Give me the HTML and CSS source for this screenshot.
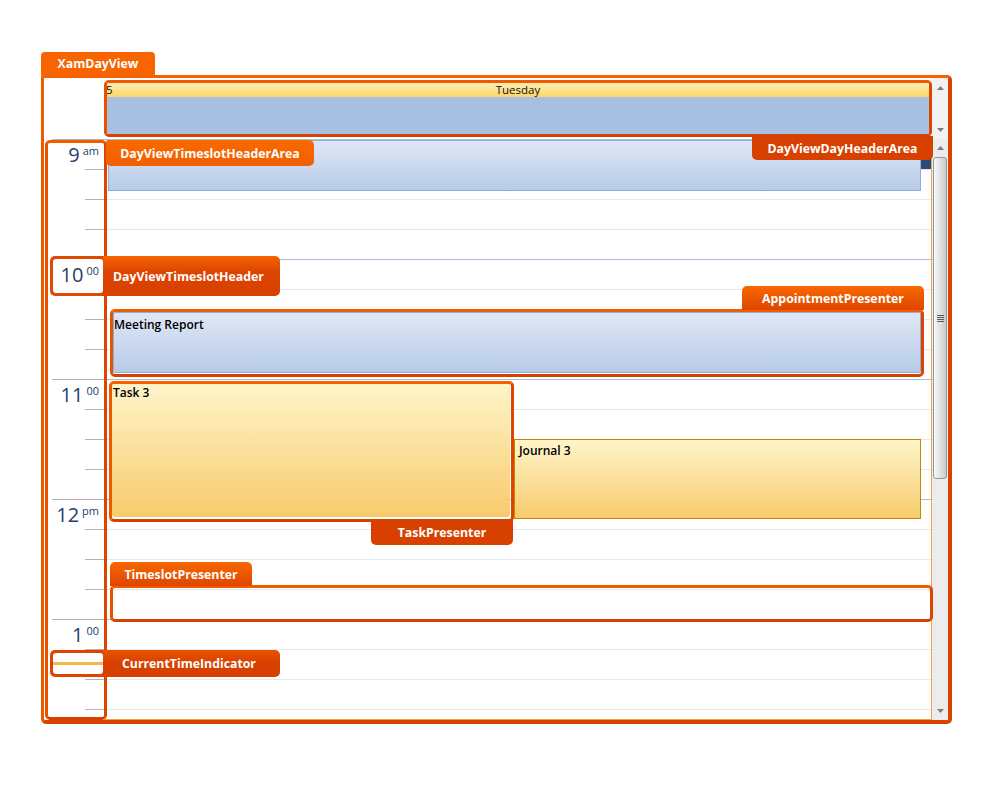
FILE: index.html
```html
<!DOCTYPE html>
<html>
<head>
<meta charset="utf-8">
<title>XamDayView</title>
<link rel="stylesheet" href="styles.css">
</head>
<body>
<div class="page">
  <div class="tab">XamDayView</div>
  <div class="frame">
    <div class="head-row">
      <div class="corner"></div>
      <div class="dayhead">
        <div class="daytitle"><span class="daynum">5</span><span class="dayname">Tuesday</span><span></span></div>
        <div class="allday"></div>
      </div>
      <div class="hscroll">
        <svg class="arrow" width="7" height="4" viewBox="0 0 7 4"><path d="M0 4L3.5 0L7 4Z"/></svg>
        <svg class="arrow" width="7" height="4" viewBox="0 0 7 4"><path d="M0 0L3.5 4L7 0Z"/></svg>
      </div>
    </div>
    <div class="body-row">
      <div class="gutter">
        <div class="hour"><div class="hlabel"><span class="hnum">9</span><span class="hsup">am</span></div><div class="mark"></div><div class="mark"></div><div class="mark"></div></div>
        <div class="hour sel"><div class="hlabel"><span class="hnum">10</span><span class="hsup">00</span></div><div class="mark"></div><div class="mark"></div><div class="mark"></div></div>
        <div class="hour"><div class="hlabel"><span class="hnum">11</span><span class="hsup">00</span></div><div class="mark"></div><div class="mark"></div><div class="mark"></div></div>
        <div class="hour"><div class="hlabel"><span class="hnum">12</span><span class="hsup">pm</span></div><div class="mark"></div><div class="mark"></div><div class="mark"></div></div>
        <div class="hour"><div class="hlabel"><span class="hnum">1</span><span class="hsup">00</span></div><div class="mark"></div><div class="mark"></div><div class="mark"></div></div>
      </div>
      <div class="grid">
        <div class="slot hr"></div><div class="slot"></div><div class="slot"></div><div class="slot"></div>
        <div class="slot hr"></div><div class="slot"></div><div class="slot"></div><div class="slot"></div>
        <div class="slot hr"></div><div class="slot"></div><div class="slot"></div><div class="slot"></div>
        <div class="slot hr"></div><div class="slot"></div><div class="slot"></div><div class="slot"></div>
        <div class="slot hr"></div><div class="slot"></div><div class="slot"></div><div class="slot"></div>
        <div class="appt blue first"></div>
        <div class="more"></div>
        <div class="appt blue meeting">Meeting Report</div>
        <div class="appt task">Task 3</div>
        <div class="appt journal">Journal 3</div>
      </div>
      <div class="vscroll">
        <div class="sbtn"><svg class="arrow" width="7" height="4" viewBox="0 0 7 4"><path d="M0 4L3.5 0L7 4Z"/></svg></div>
        <div class="thumb"><span class="grip"></span></div>
        <div class="sbtn down"><svg class="arrow" width="7" height="4" viewBox="0 0 7 4"><path d="M0 0L3.5 4L7 0Z"/></svg></div>
      </div>
    </div>
  </div>

  <div class="ring hl-gutter"></div>
  <div class="ring hl-appt"></div>
  <div class="ring hl-task"></div>
  <div class="ring hl-slot"></div>

  <div class="callout lb-dayhead">DayViewDayHeaderArea</div>
  <div class="callout lb-tsha">DayViewTimeslotHeaderArea</div>
  <div class="callout lb-tsh"><span class="hole"></span><span class="ctext">DayViewTimeslotHeader</span></div>
  <div class="callout lb-appt">AppointmentPresenter</div>
  <div class="callout lb-task">TaskPresenter</div>
  <div class="callout lb-slot">TimeslotPresenter</div>
  <div class="callout lb-cti"><span class="hole"><span class="nowline"></span></span><span class="ctext">CurrentTimeIndicator</span></div>
</div>
</body>
</html>
```

FILE: styles.css
```css
* { box-sizing: border-box; }
body {
  margin: 0;
  background: #fff;
  font-family: "Open Sans", "Noto Sans", sans-serif;
}
.page {
  position: relative;
  width: 1000px;
  height: 800px;
  padding: 52px 0 0 41px;
}
.tab {
  width: 114px;
  height: 23px;
  background: #f76400;
  color: #fff;
  font-weight: 700;
  font-size: 12.3px;
  border-radius: 4px 4px 0 0;
  display: flex;
  align-items: center;
  justify-content: center;
}
.frame {
  width: 911px;
  height: 649px;
  border-style: solid;
  border-width: 3px 4px 4px 3px;
  border-color: #f56000 #d94200 #d94200 #ee5a00;
  border-radius: 0 5px 5px 5px;
  display: flex;
  flex-direction: column;
  background: #fff;
}
.head-row { display: flex; height: 62px; }
.corner { width: 60px; }
.dayhead {
  width: 828px;
  height: 57px;
  margin-top: 2px;
  border: 3px solid #e04800;
  border-color: #f05a00 #dc4600 #d84200 #e85000;
  border-radius: 5px;
  display: flex;
  flex-direction: column;
  overflow: hidden;
}
.daytitle {
  height: 14px;
  background: linear-gradient(#ffefb4, #ffd467);
  display: grid;
  grid-template-columns: 1fr auto 1fr;
  font-size: 11.5px;
  line-height: 14px;
  color: #111;
}
.daynum { margin-left: -1px; }
.allday { flex: 1; background: #a7bfe0; }
.hscroll {
  width: 16px;
  background: #f2f2f2;
  display: flex;
  flex-direction: column;
  align-items: center;
  justify-content: space-between;
  padding: 8px 0 7px;
}
.arrow { display: block; fill: #7c7c7c; }

.body-row { display: flex; height: 581px; }
.gutter { width: 60px; overflow: hidden; }
.hour { height: 120px; margin-left: 8px; width: 52px; }
.hlabel {
  height: 30px;
  border-top: 1px solid #b3b3b3;
  display: flex;
  justify-content: flex-end;
  align-items: flex-start;
  padding: 4.5px 5px 0 0;
  color: #26406a;
}
.hour.sel .hlabel,
.hour.sel .hlabel + .mark { border-top-color: transparent; }
.hnum { font-size: 20px; line-height: 20px; }
.hsup { font-size: 11px; line-height: 11px; margin-left: 3px; }
.mark { height: 30px; margin-left: 33px; border-top: 1px solid #b3b3b3; }

.grid {
  position: relative;
  width: 828px;
  overflow: hidden;
  border-right: 1px solid #f3a24c;
  border-bottom: 1px solid #f3a24c;
}
.slot { height: 30px; border-top: 1px solid #e3e7f0; }
.slot.hr { border-top-color: #a9bfd8; }
.appt {
  position: absolute;
  font-size: 12px;
  font-weight: 600;
  color: #000;
  line-height: 16px;
}
.blue {
  background: linear-gradient(#dfe7f5, #b7cbe8);
  border: 1px solid #8eaedc;
}
.first { left: 4px; top: 1px; width: 813px; height: 51px; }
.more { position: absolute; left: 817px; top: 1px; width: 10px; height: 29px; background: #2b4a7a; }
.meeting { left: 9px; top: 173px; width: 808px; height: 61px; border-radius: 2px; padding: 4px 0 0 0; }
.task {
  left: 8px; top: 244px; width: 398px; height: 134px;
  border-radius: 3px;
  background: linear-gradient(#fff4c9, #f7cb6d);
  padding: 2px 0 0 1px;
}
.journal {
  left: 410px; top: 300px; width: 407px; height: 80px;
  background: linear-gradient(#fff5cb, #f7cb6c);
  border: 1px solid #c08a00;
  padding: 3px 0 0 4px;
}

.vscroll {
  width: 16px;
  background: #ececec;
  display: flex;
  flex-direction: column;
}
.sbtn { height: 18px; display: flex; align-items: center; justify-content: center; }
.sbtn.down { margin-top: auto; }
.thumb {
  height: 322px;
  margin: 0 1px;
  border: 1px solid #979797;
  border-radius: 3px;
  background: linear-gradient(to right, #f8f8f8, #e4e4e4 45%, #c8c8c8);
  display: flex;
  align-items: center;
  justify-content: center;
}
.grip {
  width: 7px;
  height: 7px;
  background: repeating-linear-gradient(#5a5a5a 0 1px, transparent 1px 2px);
}

/* annotation overlays */
.ring {
  position: absolute;
  border: 3px solid #e04800;
  border-color: #f25c00 #dc4400 #d84000 #ea5200;
  border-radius: 5px;
}
.hl-gutter { left: 45px; top: 140px; width: 62px; height: 580px; }
.hl-appt { left: 110px; top: 309px; width: 814px; height: 68px; }
.hl-task { left: 109px; top: 381px; width: 405px; height: 141px; border-color: #f56000 #dc4400 #d84000 #f05800; }
.hl-slot { left: 110px; top: 585px; width: 823px; height: 37px; }

.callout {
  position: absolute;
  display: flex;
  align-items: center;
  justify-content: center;
  color: #fff;
  font-weight: 700;
  font-size: 12.3px;
  white-space: nowrap;
  background: linear-gradient(#f86800, #de4600);
}
.lb-dayhead { left: 752px; top: 136px; width: 181px; height: 24px; background: #d84000; border-radius: 0 0 5px 5px; }
.lb-tsha { left: 106px; top: 140px; width: 208px; height: 26px; background: linear-gradient(#f86a00, #f25e00); border-radius: 2px 5px 5px 5px; }
.lb-appt { left: 742px; top: 286px; width: 182px; height: 24px; border-radius: 5px 5px 0 0; }
.lb-task { left: 371px; top: 519px; width: 142px; height: 26px; background: #d84000; border-radius: 0 0 5px 5px; }
.lb-slot { left: 110px; top: 562px; width: 142px; height: 24px; border-radius: 5px 5px 0 0; }

.lb-tsh, .lb-cti {
  justify-content: flex-start;
  align-items: stretch;
  background: none;
  overflow: hidden;
  border-radius: 5px;
  padding: 3px 0 3px 3px;
}
.lb-tsh { left: 50px; top: 256px; width: 230px; height: 40px; }
.lb-cti { left: 50px; top: 650px; width: 230px; height: 27px; }
.hole {
  width: 50px;
  border-radius: 3px;
  box-shadow: 0 0 0 30px #e04a00;
  display: flex;
  align-items: center;
}
.lb-cti .hole { box-shadow: 0 0 0 30px #dc4400; }
.ctext {
  flex: 1;
  margin: -3px 0;
  display: flex;
  align-items: center;
  position: relative;
}
.lb-tsh .ctext { padding-left: 10px; background: linear-gradient(#f46400, #dc4400 40%, #d84000); }
.lb-cti .ctext { padding-left: 19px; background: linear-gradient(#e85200, #d84000 50%); }
.nowline { display: block; width: 100%; height: 3px; background: #f6b64a; }
```
